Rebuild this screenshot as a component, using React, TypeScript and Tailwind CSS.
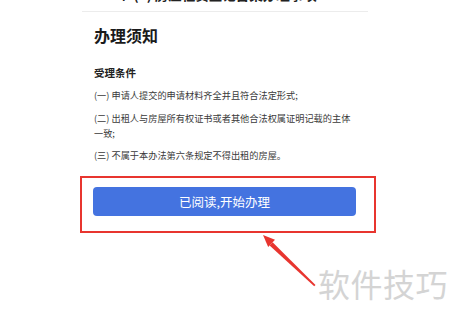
import React from 'react';

const conditions = [
  '(一) 申请人提交的申请材料齐全并且符合法定形式;',
  '(二) 出租人与房屋所有权证书或者其他合法权属证明记载的主体一致;',
  '(三) 不属于本办法第六条规定不得出租的房屋。',
];

export default function App() {
  return (
    <div className="relative w-[450px] h-[320px] overflow-hidden bg-white font-['Noto_Sans_CJK_SC',sans-serif]">
      <div className="ml-[82px] w-[286px]">
        {/* page title, scrolled mostly out of view */}
        <div className="h-[11px] overflow-hidden pl-[24px]">
          <div className="-mt-[14px] text-[13.5px] leading-[17px] font-bold text-[#222] whitespace-nowrap">
            1 个 (1) 房屋租赁登记备案办理事项
          </div>
        </div>
        <div className="h-[1px] bg-[#ececec]" />

        <div className="pl-[11px] pr-[12px]">
          <h1 className="mt-[13px] pl-[1px] text-[16px] leading-[20px] font-bold text-[#1a1a1a]">办理须知</h1>
          <h2 className="mt-[21px] pl-[1px] text-[10.5px] leading-[14px] font-bold text-[#222]">受理条件</h2>

          <div className="mt-[8px] pl-[1px] pr-[4px] flex flex-col gap-[7.5px]">
            {conditions.map((c) => (
              <p key={c} className="text-[9.2px] leading-[15px] text-[#3a3a3a]">
                {c}
              </p>
            ))}
          </div>

          <button
            type="button"
            className="mt-[24px] w-full h-[29px] rounded-[4px] bg-[#4473e0] text-white text-[12.5px] leading-[29px]"
          >
            已阅读,开始办理
          </button>
        </div>
      </div>

      {/* annotation: highlight box */}
      <div className="absolute left-[80px] top-[176px] w-[296px] h-[57px] border-2 border-[#e8352f]" />

      {/* annotation: arrow */}
      <svg className="absolute left-0 top-0" width="450" height="320" viewBox="0 0 450 320">
        <polygon points="315.5,285 314.2,286.2 269.6,245.4 272.6,242.2" fill="#e8352f" />
        <polygon points="263,235 275,239.7 268.2,246.9" fill="#e8352f" />
      </svg>

      {/* watermark */}
      <div className="absolute left-[318px] top-[267px] text-[32px] leading-none text-[#d4d4d4] tracking-[0.5px]">
        软件技巧
      </div>
    </div>
  );
}
